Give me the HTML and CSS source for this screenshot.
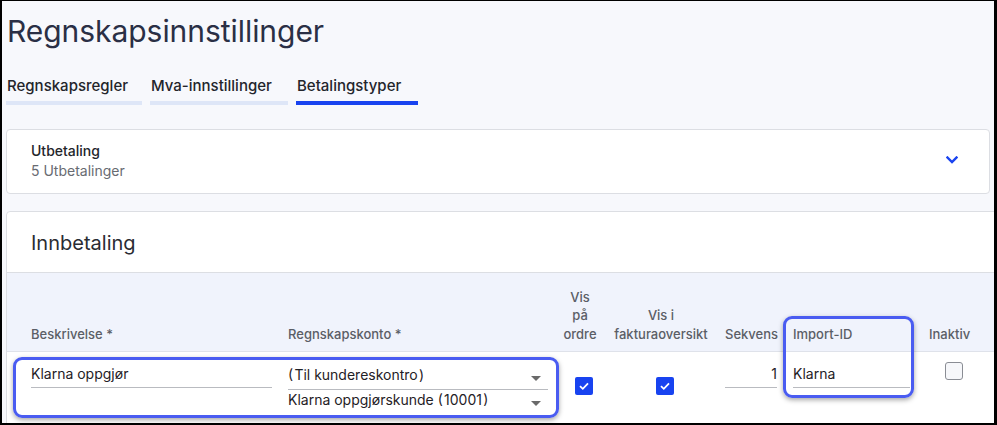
FILE: index.html
```html
<!DOCTYPE html>
<html lang="no">
<head>
<meta charset="utf-8">
<title>Regnskapsinnstillinger</title>
<link rel="stylesheet" href="styles.css">
</head>
<body>
<div class="frame">
  <div class="page">
    <h1 class="title">Regnskapsinnstillinger</h1>
    <nav class="tabs">
      <div class="tab tab-1">Regnskapsregler</div>
      <div class="tab tab-2">Mva-innstillinger</div>
      <div class="tab tab-3 active">Betalingstyper</div>
    </nav>

    <section class="card collapsed">
      <div class="card-text">
        <div class="card-title">Utbetaling</div>
        <div class="card-sub">5 Utbetalinger</div>
      </div>
      <svg class="chevron" width="12" height="8" viewBox="0 0 12 8"><path d="M1.5 1.5 L6 6 L10.5 1.5" fill="none" stroke="#1a44f0" stroke-width="2.4" stroke-linecap="square"/></svg>
    </section>

    <section class="card open">
      <div class="card-head">Innbetaling</div>
      <div class="thead">
        <div class="th">Beskrivelse *</div>
        <div class="th">Regnskapskonto *</div>
        <div class="th center">Vis<br>på<br>ordre</div>
        <div class="th center">Vis i<br>fakturaoversikt</div>
        <div class="th sek">Sekvens</div>
        <div class="th imp">Import-ID</div>
        <div class="th">Inaktiv</div>
      </div>
      <div class="trow">
        <div class="cell"><div class="field">Klarna oppgjør</div></div>
        <div class="cell">
          <div class="select first">(&#8202;Til kundereskontro&#8202;)<span class="caret"></span></div>
          <div class="select">Klarna oppgjørskunde (&#8202;10001&#8202;)<span class="caret"></span></div>
        </div>
        <div class="cell center"><span class="check on"><svg width="12" height="10" viewBox="0 0 12 10"><path d="M2 5.2 L4.8 7.8 L10 2.4" fill="none" stroke="#fff" stroke-width="1.8"/></svg></span></div>
        <div class="cell center"><span class="check on"><svg width="12" height="10" viewBox="0 0 12 10"><path d="M2 5.2 L4.8 7.8 L10 2.4" fill="none" stroke="#fff" stroke-width="1.8"/></svg></span></div>
        <div class="cell sek"><div class="field num">1</div></div>
        <div class="cell imp"><div class="field">Klarna</div></div>
        <div class="cell"><span class="check off"></span></div>
        <div class="mark mark-1"></div>
        <div class="mark mark-2"></div>
      </div>
    </section>
  </div>
</div>
</body>
</html>
```

FILE: styles.css
```css
html, body {
  margin: 0;
  padding: 0;
  background: #ffffff;
}

.frame {
  width: 997px;
  height: 425px;
  box-sizing: border-box;
  border-style: solid;
  border-color: #000;
  border-width: 1px 3px 2px 2px;
  overflow: hidden;
  background: #f7f8fc;
  font-family: Inter, "Noto Sans", sans-serif;
  color: #24262b;
}

.page {
  padding: 0 0 0 4px;
  width: 1010px;
}

.title {
  margin: 12px 0 0 1px;
  font-size: 30px;
  line-height: 36px;
  font-weight: 400;
  color: #2a2f45;
  letter-spacing: -0.05px;
}

.tabs {
  display: flex;
  gap: 8px;
  margin-top: 27px;
}

.tab {
  font-size: 15px;
  line-height: 20px;
  font-weight: 500;
  color: #23252b;
  padding: 0 0 5px 1px;
  border-bottom: 4px solid #dee6f7;
  box-sizing: border-box;
}
.tab-1 { width: 136px; }
.tab-2 { width: 138px; }
.tab-3 { width: 122px; }
.tab.active { border-bottom-color: #1843f0; }

.card {
  background: #fff;
  border: 1px solid #dcdee3;
  border-radius: 4px;
}

.collapsed {
  margin-top: 24px;
  width: 984px;
  box-sizing: border-box;
  display: flex;
  align-items: center;
  justify-content: space-between;
  padding: 11px 31px 12px 24px;
}

.card-title {
  font-size: 14px;
  line-height: 20px;
  font-weight: 500;
  color: #23252b;
}
.card-sub {
  font-size: 14px;
  line-height: 20px;
  color: #686b72;
}
.chevron { display: block; margin-top: -3px; }

.open {
  margin-top: 17px;
  width: 1000px;
  border-radius: 4px 4px 0 0;
}

.card-head {
  padding: 17px 0 15px 24px;
  font-size: 20px;
  line-height: 28px;
  color: #2a2c33;
  border-bottom: 1px solid #dcdee3;
}

.thead, .trow {
  display: grid;
  grid-template-columns: 257px 260px 64px 98px 67px 152px 1fr;
  padding-left: 24px;
}

.thead {
  height: 78px;
  background: #f0f3fc;
  border-bottom: 1px solid #dfe2ea;
  align-items: end;
}

.th {
  font-size: 13px;
  line-height: 18.5px;
  font-weight: 500;
  color: #5b5e66;
  padding-bottom: 8px;
}
.center { text-align: center; }
.sek { padding-left: 15px; }
.imp { padding-left: 16px; }

.trow {
  position: relative;
  padding-top: 12px;
  padding-bottom: 20px;
  background: #fff;
}

.cell { min-width: 0; }

.field {
  font-size: 14px;
  line-height: 20px;
  color: #1f2126;
  padding-bottom: 3px;
  border-bottom: 1px solid #b9bbc0;
  margin-right: 16px;
}
.cell.sek .field { margin-right: 0; }
.cell.imp .field { margin-right: 19px; }
.field.num { text-align: right; }

.select {
  position: relative;
  font-size: 14px;
  line-height: 20px;
  color: #1f2126;
  padding-bottom: 5px;
}
.select.first {
  margin-top: 1px;
  padding-bottom: 4px;
  border-bottom: 1px solid #b9bbc0;
}

.caret {
  position: absolute;
  right: 7px;
  top: 11px;
  width: 0;
  height: 0;
  border-left: 5px solid transparent;
  border-right: 5px solid transparent;
  border-top: 5px solid #6a6a6a;
}

.check {
  display: inline-flex;
  align-items: center;
  justify-content: center;
  width: 18px;
  height: 18px;
  box-sizing: border-box;
  border-radius: 2px;
  vertical-align: top;
}
.check.on {
  background: #1843f0;
  margin-top: 13px;
  margin-left: 8px;
}
.check.off {
  border: 1px solid #8a8d94;
  background: #f6f7fa;
  border-radius: 3px;
  margin-top: -2px;
  margin-left: 16px;
}

.mark {
  position: absolute;
  border: 3px solid #4a5cf1;
  border-radius: 9px;
  box-shadow: 0 2px 5px rgba(0, 0, 0, 0.35);
  box-sizing: border-box;
  pointer-events: none;
}
.mark-1 {
  left: 6px;
  top: 5px;
  width: 546px;
  height: 61px;
}
.mark-2 {
  left: 776px;
  top: -36px;
  width: 131px;
  height: 82px;
}
```
